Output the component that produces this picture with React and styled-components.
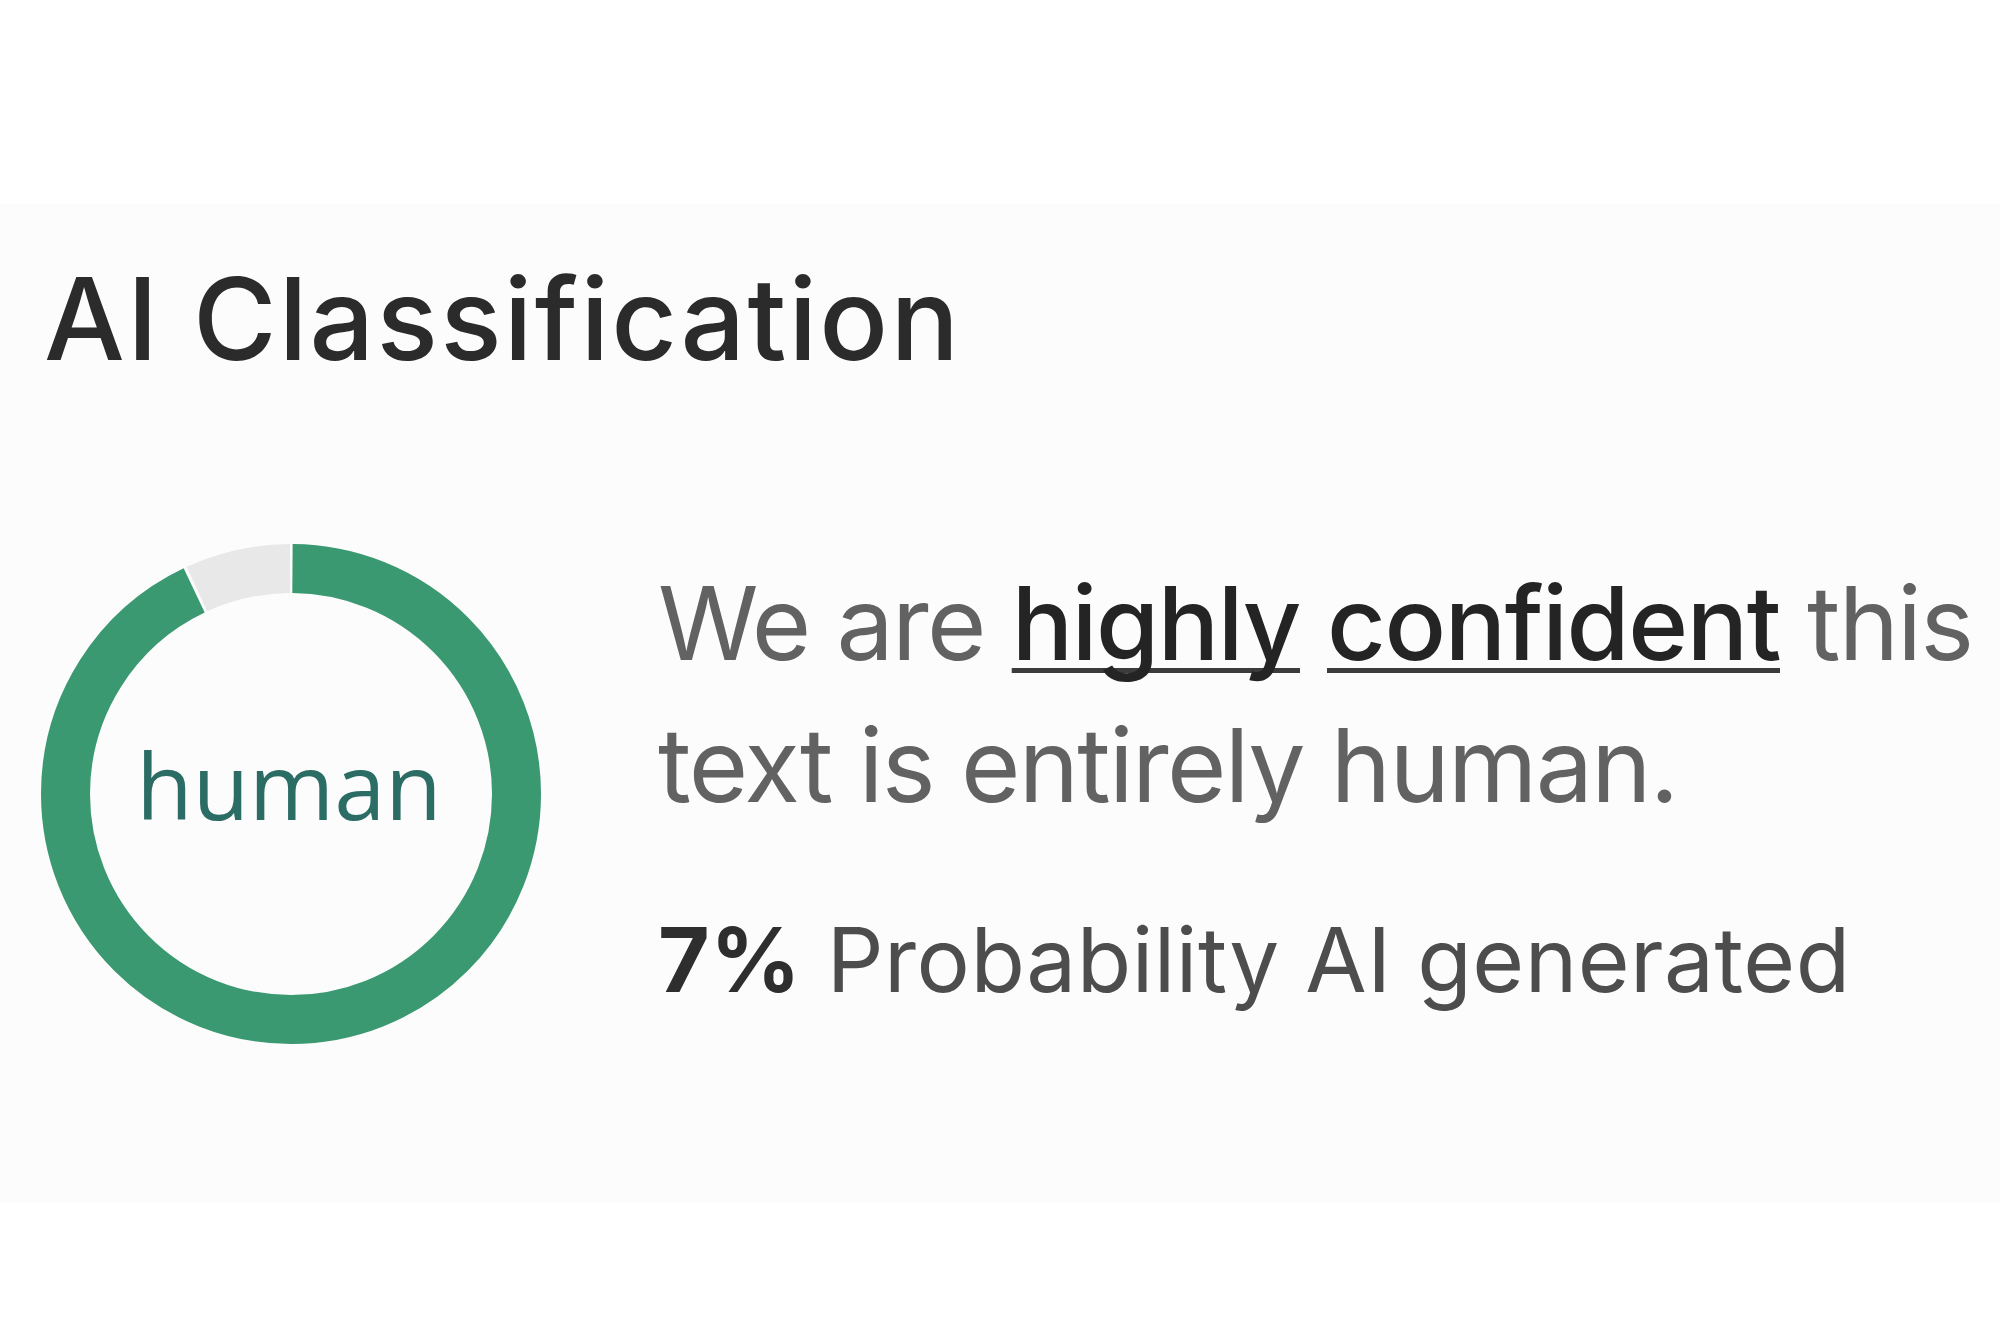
import React from 'react';
import styled, { createGlobalStyle } from 'styled-components';

const GlobalStyle = createGlobalStyle`
  html, body {
    margin: 0;
    padding: 0;
    background: #ffffff;
  }
  body {
    font-family: Inter, "Liberation Sans", Arial, sans-serif;
  }
`;

const Page = styled.div`
  padding-top: 204px;
  min-height: 1335px;
  box-sizing: border-box;
`;

const Panel = styled.section`
  background: #fcfcfc;
  height: 999px;
  box-sizing: border-box;
  padding: 58px 0 0 44px;
`;

const Title = styled.h2`
  margin: 0;
  font-size: 114px;
  line-height: 1;
  font-weight: 500;
  color: #2b2b2b;
  letter-spacing: 2.2px;
`;

const Body = styled.div`
  display: flex;
  align-items: flex-start;
  gap: 117px;
  margin-top: 168px;
  margin-left: -3px;
`;

const Donut = styled.svg`
  flex: 0 0 auto;
  display: block;
`;

const Summary = styled.div`
  display: flex;
  flex-direction: column;
  padding-top: 8px;
`;

const Verdict = styled.p`
  margin: 0;
  font-size: 102px;
  line-height: 142px;
  letter-spacing: -1.7px;
  color: #626262;
  white-space: nowrap;
`;

const Emph = styled.span`
  color: #242424;
  font-weight: 500;
  letter-spacing: -1.4px;
  text-decoration: underline;
  text-decoration-thickness: 5px;
  text-underline-offset: 8px;
  text-decoration-color: #3c3c3c;
  text-decoration-skip-ink: none;
`;

const Probability = styled.p`
  margin: 62px 0 0;
  font-size: 89px;
  line-height: 124px;
  letter-spacing: 0.5px;
  color: #4d4d4d;
  white-space: nowrap;
`;

const Percent = styled.strong`
  font-weight: 700;
  color: #2e2e2e;
`;

const SIZE = 500;
const STROKE = 49;
const R = (SIZE - STROKE) / 2;
const C = 2 * Math.PI * R;

function Ring({ aiShare, label }) {
  const gap = 3;
  const humanLen = C * (1 - aiShare) - gap;
  const aiLen = C * aiShare - gap;
  return (
    <Donut width={SIZE} height={SIZE} viewBox={`0 0 ${SIZE} ${SIZE}`}>
      <g transform={`rotate(-90 ${SIZE / 2} ${SIZE / 2})`}>
        <circle
          cx={SIZE / 2}
          cy={SIZE / 2}
          r={R}
          fill="none"
          stroke="#3a9970"
          strokeWidth={STROKE}
          strokeDasharray={`${humanLen} ${C}`}
          strokeDashoffset={-gap / 2}
        />
        <circle
          cx={SIZE / 2}
          cy={SIZE / 2}
          r={R}
          fill="none"
          stroke="#e8e8e8"
          strokeWidth={STROKE}
          strokeDasharray={`${aiLen} ${C}`}
          strokeDashoffset={-(C * (1 - aiShare) + gap / 2)}
        />
      </g>
      <text
        x={SIZE / 2 - 2}
        y={SIZE / 2 + 26}
        textAnchor="middle"
        fontFamily='"Open Sans", "Noto Sans", sans-serif'
        fontSize="92"
        fill="#2b6c64"
      >
        {label}
      </text>
    </Donut>
  );
}

export default function App() {
  return (
    <Page>
      <GlobalStyle />
      <Panel>
        <Title>AI Classification</Title>
        <Body>
          <Ring aiShare={0.07} label="human" />
          <Summary>
            <Verdict>
              We are <Emph>highly</Emph> <Emph>confident</Emph> this
              <br />
              text is entirely human.
            </Verdict>
            <Probability>
              <Percent>7%</Percent> Probability AI generated
            </Probability>
          </Summary>
        </Body>
      </Panel>
    </Page>
  );
}
